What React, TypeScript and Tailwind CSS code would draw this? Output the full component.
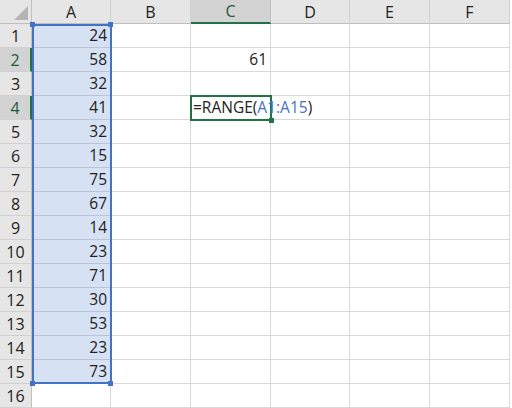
import React from 'react';

const COLS = ['A', 'B', 'C', 'D', 'E', 'F'];
const WIDTHS = [79, 80, 80, 79, 80, 80];
const VALUES = [24, 58, 32, 41, 32, 15, 75, 67, 14, 23, 71, 30, 53, 23, 73];

export default function App() {
  const rows = Array.from({ length: 16 }, (_, i) => i + 1);
  return (
    <div className="relative w-[512px] h-[408px] overflow-hidden bg-white text-[15.5px] text-[#222]" style={{ fontFamily: '"Open Sans", "Liberation Sans", Arial, sans-serif' }}>
      <div className="flex h-6">
        <div className="relative w-8 shrink-0 bg-[#e6e6e6] border-r border-b border-[#bfbfbf]">
          <div className="absolute right-[3px] bottom-[3px] w-0 h-0 border-l-[14px] border-l-transparent border-b-[14px] border-b-[#b4b4b4]" />
        </div>
        {COLS.map((c, i) => (
          <div
            key={c}
            className={`shrink-0 flex items-center justify-center border-r text-[16px] ${c === 'C' ? 'bg-[#d3d3d3] border-b-2 border-b-[#217346] text-[#1d5c38] border-r-[#bfbfbf]' : 'bg-[#e6e6e6] border-b border-b-[#bfbfbf] border-r-[#d0d0d0]'}`}
            style={{ width: WIDTHS[i] }}
          >
            {c}
          </div>
        ))}
      </div>
      {rows.map((r) => (
        <div key={r} className="flex h-6">
          <div className={`w-8 shrink-0 flex items-center justify-center border-b text-[16px] ${r === 2 || r === 4 ? 'bg-[#d3d3d3] border-r-2 border-r-[#217346] text-[#1d5c38]' : 'bg-[#e6e6e6] border-r border-r-[#bfbfbf]'} border-b-[#d0d0d0]`}>
            {r}
          </div>
          {COLS.map((c, i) => (
            <div
              key={c}
              className={`shrink-0 flex items-center justify-end pr-[3px] border-r border-b ${c === 'A' && r <= 15 ? 'bg-[#d6e1f3] border-[#b9c4d6]' : 'border-[#d9d9d9]'}`}
              style={{ width: WIDTHS[i] }}
            >
              {c === 'A' && r <= 15 ? VALUES[r - 1] : c === 'C' && r === 2 ? 61 : ''}
            </div>
          ))}
        </div>
      ))}
      <div className="absolute left-[32px] top-[24px] w-[80px] h-[360px] border-2 border-[#4472c4] pointer-events-none" />
      <div className="absolute left-[30px] top-[22px] w-[5px] h-[5px] bg-[#4472c4]" />
      <div className="absolute left-[108px] top-[22px] w-[5px] h-[5px] bg-[#4472c4]" />
      <div className="absolute left-[30px] top-[381px] w-[5px] h-[5px] bg-[#4472c4]" />
      <div className="absolute left-[108px] top-[381px] w-[5px] h-[5px] bg-[#4472c4]" />
      <div className="absolute left-[190px] top-[95px] w-[82px] h-[26px] border-2 border-[#217346] bg-white flex items-center pl-[1px] whitespace-nowrap overflow-visible">
        <span>=RANGE(</span><span className="text-[#4472c4]">A1:A15</span><span>)</span>
      </div>
      <div className="absolute left-[269px] top-[118px] w-[5px] h-[5px] bg-[#217346]" />
    </div>
  );
}
